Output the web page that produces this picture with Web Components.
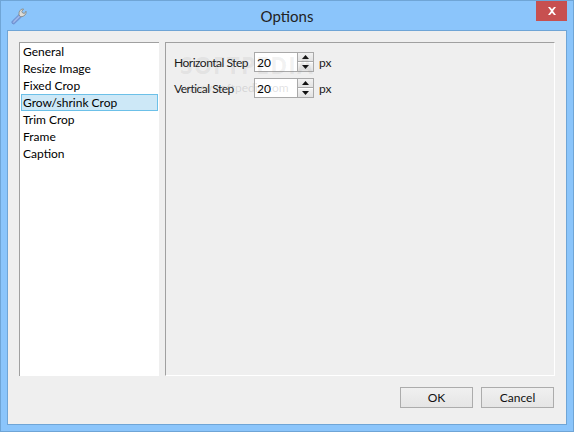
<!DOCTYPE html>
<html>
<head>
<meta charset="utf-8">
<title>Options</title>
<style>
html, body { margin: 0; padding: 0; }
body { font: 12px Lato, Roboto, sans-serif; color: #000; }
</style>
</head>
<body>
<options-window>
    <option-list slot="list">
        <list-row>General</list-row>
        <list-row>Resize Image</list-row>
        <list-row>Fixed Crop</list-row>
        <list-row selected>Grow/shrink Crop</list-row>
        <list-row>Trim Crop</list-row>
        <list-row>Frame</list-row>
        <list-row>Caption</list-row>
    </option-list>
    <step-panel slot="panel">
        <step-field value="20">Horizontal Step</step-field>
        <step-field value="20">Vertical Step</step-field>
    </step-panel>
    <dialog-button slot="buttons">OK</dialog-button>
    <dialog-button slot="buttons">Cancel</dialog-button>
</options-window>

<script>
class OptionsWindow extends HTMLElement {
    constructor() {
        super();
        this.shadowDOM = this.attachShadow({ mode: "open" });
    }

    connectedCallback() {
        this.shadowDOM.innerHTML = `
        <style>
            :host {
                display: flex;
                flex-direction: column;
                box-sizing: border-box;
                width: 574px;
                height: 432px;
                background: #8bc5fb;
                border: 1px solid #6fa5d6;
            }
            .title {
                position: relative;
                height: 29px;
                display: flex;
                align-items: center;
                justify-content: center;
                font-size: 15px;
                color: #222;
                box-sizing: border-box;
            }
            .icon {
                position: absolute;
                left: 9px;
                top: 6px;
            }
            .close {
                position: absolute;
                top: 0;
                right: 6px;
                width: 31px;
                height: 20px;
                background: #c75050;
                display: flex;
                align-items: center;
                justify-content: center;
            }
            .client {
                flex: 1;
                margin: 0 6px 6px;
                background: #efefef;
                border: 1px solid #6fa5d6;
                display: flex;
                flex-direction: column;
                min-height: 0;
            }
            .main {
                height: 334px;
                margin: 11px 11px 0;
                display: flex;
                gap: 6px;
            }
            .buttons {
                display: flex;
                justify-content: flex-end;
                gap: 8px;
                margin: 11px 12px 0 0;
            }
        </style>
        <div class="title">
            <svg class="icon" width="18" height="18" viewBox="0 0 18 18">
                <path d="M2.2 14.2 L9.2 7.4 L11.6 9.8 L4.6 16.6 Q3.4 17.4 2.3 16.4 Q1.4 15.2 2.2 14.2 Z" fill="#7f9fdc" stroke="#6483c4" stroke-width="0.7"/>
                <path d="M3.4 15.2 L9.6 9" stroke="#b9cdf2" stroke-width="1"/>
                <path d="M9 8 Q8.4 4.6 10.6 2.8 Q12 1.8 13.6 2 L11.8 4.4 L12.6 6 L14.4 6.4 L16 4.2 Q16.6 6.4 15 8 Q13.2 9.8 10.8 9.8 Z" fill="#dcdcd8" stroke="#85857f" stroke-width="0.8"/>
            </svg>
            <span>Options</span>
            <div class="close">
                <svg width="10" height="8" viewBox="0 0 10 8">
                    <path d="M1 0 L3 0 L5 2.2 L7 0 L9 0 L6 4 L9 8 L7 8 L5 5.8 L3 8 L1 8 L4 4 Z" fill="#fff"/>
                </svg>
            </div>
        </div>
        <div class="client">
            <div class="main">
                <slot name="list"></slot>
                <slot name="panel"></slot>
            </div>
            <div class="buttons"><slot name="buttons"></slot></div>
        </div>`;
    }
}

class OptionList extends HTMLElement {
    constructor() {
        super();
        this.shadowDOM = this.attachShadow({ mode: "open" });
    }

    connectedCallback() {
        this.shadowDOM.innerHTML = `
        <style>
            :host {
                display: block;
                box-sizing: border-box;
                width: 140px;
                height: 334px;
                background: #fff;
                border-top: 1px solid #a0a0a0;
                border-left: 1px solid #a0a0a0;
                padding: 0 1px 0 1px;
            }
        </style>
        <slot></slot>`;
    }
}

class ListRow extends HTMLElement {
    constructor() {
        super();
        this.shadowDOM = this.attachShadow({ mode: "open" });
    }

    connectedCallback() {
        this.shadowDOM.innerHTML = `
        <style>
            :host {
                display: block;
                box-sizing: border-box;
                height: 17px;
                line-height: 17px;
                padding: 0 0 0 1px;
                white-space: nowrap;
                border: 1px solid transparent;
                border-width: 0 1px;
            }
            :host([selected]) {
                background: #cde8f7;
                border: 1px solid #6cc0e8;
                line-height: 15px;
            }
        </style>
        <slot></slot>`;
    }
}

class StepPanel extends HTMLElement {
    constructor() {
        super();
        this.shadowDOM = this.attachShadow({ mode: "open" });
    }

    connectedCallback() {
        this.shadowDOM.innerHTML = `
        <style>
            :host {
                position: relative;
                display: flex;
                flex-direction: column;
                gap: 6px;
                box-sizing: border-box;
                width: 390px;
                height: 334px;
                padding: 9px 8px;
                border-top: 1px solid #a0a0a0;
                border-left: 1px solid #a0a0a0;
                border-right: 1px solid #fff;
                border-bottom: 1px solid #fff;
            }
            .mark {
                position: absolute;
                left: 14px;
                top: 6px;
                font: bold 23px "Open Sans", sans-serif;
                letter-spacing: 1px;
                color: rgba(120, 120, 120, 0.10);
                pointer-events: none;
            }
            .url {
                position: absolute;
                left: 18px;
                top: 37px;
                font-size: 12px;
                color: rgba(120, 120, 120, 0.22);
                pointer-events: none;
            }
        </style>
        <slot></slot>
        <span class="mark">SOFTPEDIA</span>
        <span class="url">www.softpedia.com</span>`;
    }
}

class StepField extends HTMLElement {
    constructor() {
        super();
        this.shadowDOM = this.attachShadow({ mode: "open" });
    }

    connectedCallback() {
        const value = this.getAttribute("value");
        this.shadowDOM.innerHTML = `
        <style>
            :host {
                display: flex;
                align-items: center;
                height: 20px;
                color: #1a1a1a;
            }
            .label { width: 80px; white-space: nowrap; letter-spacing: -0.5px; }
            .box {
                box-sizing: border-box;
                width: 60px;
                height: 20px;
                display: flex;
                background: #fff;
                border: 1px solid #a9a9a9;
            }
            .value { flex: 1; padding-left: 2px; line-height: 19px; color: #000; }
            .arrows {
                width: 16px;
                display: flex;
                flex-direction: column;
                gap: 1px;
                box-sizing: border-box;
                background: #fff;
                border-left: 1px solid #a9a9a9;
            }
            .arrows div {
                flex: 1;
                background: linear-gradient(#f2f2f2, #e2e2e2);
                display: flex;
                align-items: center;
                justify-content: center;
            }
            .arrows div:first-child { border-bottom: 1px solid #a9a9a9; }
            .unit { margin-left: 5px; }
        </style>
        <span class="label"><slot></slot></span>
        <div class="box">
            <span class="value">${value}</span>
            <div class="arrows">
                <div><svg width="7" height="4" viewBox="0 0 7 4"><path d="M3.5 0 L7 4 L0 4 Z" fill="#111"/></svg></div>
                <div><svg width="7" height="4" viewBox="0 0 7 4"><path d="M0 0 L7 0 L3.5 4 Z" fill="#111"/></svg></div>
            </div>
        </div>
        <span class="unit">px</span>`;
    }
}

class DialogButton extends HTMLElement {
    constructor() {
        super();
        this.shadowDOM = this.attachShadow({ mode: "open" });
    }

    connectedCallback() {
        this.shadowDOM.innerHTML = `
        <style>
            :host {
                display: flex;
                align-items: center;
                justify-content: center;
                box-sizing: border-box;
                width: 73px;
                height: 21px;
                background: linear-gradient(#f0f0f0, #e5e5e5);
                border: 1px solid #acacac;
                color: #111;
            }
        </style>
        <slot></slot>`;
    }
}

customElements.define("options-window", OptionsWindow);
customElements.define("option-list", OptionList);
customElements.define("list-row", ListRow);
customElements.define("step-panel", StepPanel);
customElements.define("step-field", StepField);
customElements.define("dialog-button", DialogButton);
</script>
</body>
</html>
